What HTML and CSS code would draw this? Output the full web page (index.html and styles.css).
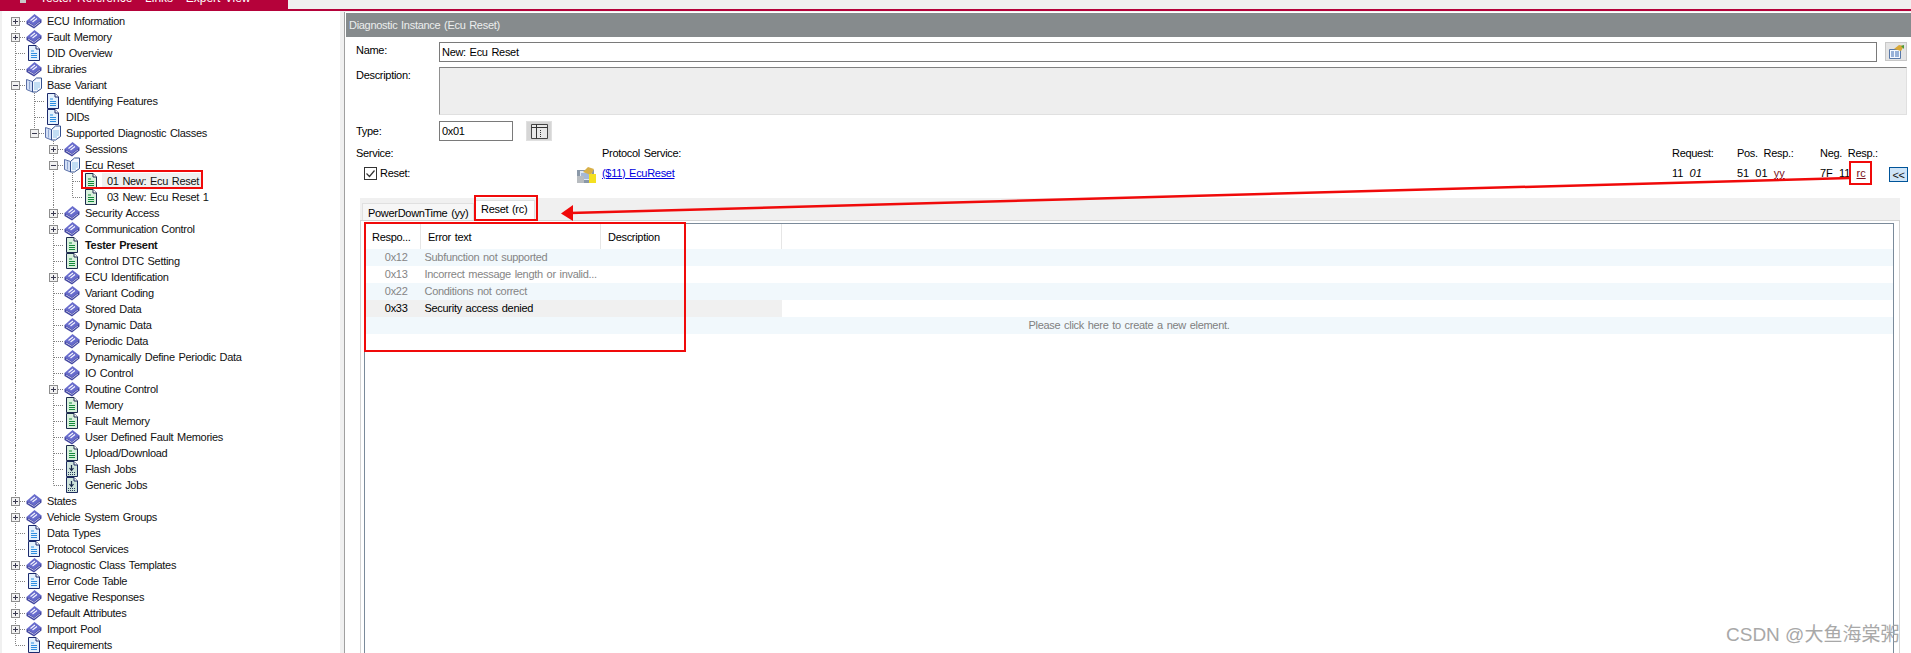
FILE: index.html
```html
<!DOCTYPE html>
<html lang="en">
<head>
  <meta charset="UTF-8" />
  <meta name="viewport" content="width=device-width, initial-scale=1.0"/>
  <title>Tester Reference - Links - Expert View</title>
  <link rel="stylesheet" href="styles.css">
</head>
<body>

  <!-- Shared icons -->
  <svg class="defs" width="0" height="0">
    <symbol id="book" viewBox="0 0 16 16">
      <path d="M.5 8v3l7.500 4.500 7.500-6v-3z" fill="#4246a0"/>
      <path d="M2 9.500l6 3.500 6-4.500v.8l-6 4.500-6-3.500z" fill="#e4e4f6"/>
      <path d="M.5 8L8.500 1l7 5.500-7.500 6z" fill="#686ccc"/>
      <path d="M4.500 7.500l4.500-3.500M6.500 9l4.500-3.500" stroke="#f4f4ff" stroke-width="1.200"/>
    </symbol>
    <symbol id="open" viewBox="0 0 16 16">
      <path d="M.5 2.500l6 2v10.500l-6-2.500z" fill="#d4e0f6" stroke="#5a6fa8"/>
      <path d="M6.500 4.500l4-3.500h5v10.500l-5 3.500h-4z" fill="#f4f8ff" stroke="#34508e"/>
      <path d="M8.500 6h5M8.500 8h5M8.500 10h5M8.500 12h4" stroke="#2f8fd0" stroke-dasharray="1 1"/>
      <path d="M3.500 4.500v8" stroke="#8fa6d0"/>
    </symbol>
    <symbol id="page" viewBox="0 0 16 16">
      <path d="M2.500 .5h7.500l3.500 3.500v11.500h-11z" fill="#e4f1fd" stroke="#1c2a6c"/>
      <path d="M10 .5v3.500h3.500" fill="#fff" stroke="#1c2a6c"/>
      <path d="M5 6h3M5 8.500h6M5 10.500h6M5 12.500h6" stroke="#2f8ee0"/>
    </symbol>
    <symbol id="leaf" viewBox="0 0 16 16">
      <path d="M2.500 .5h7.500l3.500 3.500v11.500h-11z" fill="#d8f0dc" stroke="#1c2a4c"/>
      <path d="M10 .5v3.500h3.500" fill="#fff" stroke="#1c2a4c"/>
      <path d="M5 6h3M5 8.500h6M5 10.500h6M5 12.500h6" stroke="#128a3a"/>
    </symbol>
    <symbol id="job" viewBox="0 0 16 16">
      <path d="M2.500 .5h7.500l3.500 3.500v11.500h-11z" fill="#cfe4dc" stroke="#1c2a5c"/>
      <path d="M10 .5v3.500h3.500" fill="#fff" stroke="#1c2a5c"/>
      <path d="M7.500 4v5M5.500 7l2 2.500L9.500 7" fill="none" stroke="#1c2a4c" stroke-width="1.200"/>
      <path d="M4 11.500h8M4 13.500h8" stroke="#2a3a5c" stroke-dasharray="1 1"/>
    </symbol>

    <!-- Tree connectors -->
    <symbol id="tee" viewBox="0 0 19 16">
      <path d="M9.500 0v16M10 8.500h9" stroke="#808080" stroke-dasharray="1 1"/>
    </symbol>
    <symbol id="end" viewBox="0 0 19 16">
      <path d="M9.500 0v8.500M10 8.500h9" stroke="#808080" stroke-dasharray="1 1"/>
    </symbol>
    <symbol id="plus" viewBox="0 0 19 16">
      <path d="M9.500 0v16M14 8.500h5" stroke="#808080" stroke-dasharray="1 1"/>
      <rect x="5.500" y="4.500" width="8" height="8" fill="#f2f2f2" stroke="#8e8e8e"/>
      <path d="M7 8.500h5M9.500 6v5" stroke="#3a3a50"/>
    </symbol>
    <symbol id="plus-first" viewBox="0 0 19 16">
      <path d="M9.500 12v4M14 8.500h5" stroke="#808080" stroke-dasharray="1 1"/>
      <rect x="5.500" y="4.500" width="8" height="8" fill="#f2f2f2" stroke="#8e8e8e"/>
      <path d="M7 8.500h5M9.500 6v5" stroke="#3a3a50"/>
    </symbol>
    <symbol id="minus" viewBox="0 0 19 16">
      <path d="M9.500 0v16M14 8.500h5" stroke="#808080" stroke-dasharray="1 1"/>
      <rect x="5.500" y="4.500" width="8" height="8" fill="#f2f2f2" stroke="#8e8e8e"/>
      <path d="M7 8.500h5" stroke="#3a3a50"/>
    </symbol>
    <symbol id="minus-end" viewBox="0 0 19 16">
      <path d="M9.500 0v5M14 8.500h5" stroke="#808080" stroke-dasharray="1 1"/>
      <rect x="5.500" y="4.500" width="8" height="8" fill="#f2f2f2" stroke="#8e8e8e"/>
      <path d="M7 8.500h5" stroke="#3a3a50"/>
    </symbol>
  </svg>

  <div class="titlebar">
    <div class="brand">
      <span class="brand-icon"></span>
      <span class="brand-text">Tester Reference - Links - Expert View</span>
    </div>
  </div>
  <div class="rule"></div>

  <div class="main">

    <!-- Left tree -->
    <div class="tree">
      <div class="row"><svg class="tw"><use href="#plus-first"/></svg><svg class="ic"><use href="#book"/></svg><span>ECU Information</span></div>
      <div class="row"><svg class="tw"><use href="#plus"/></svg><svg class="ic"><use href="#book"/></svg><span>Fault Memory</span></div>
      <div class="row"><svg class="tw"><use href="#tee"/></svg><svg class="ic"><use href="#page"/></svg><span>DID Overview</span></div>
      <div class="row"><svg class="tw"><use href="#tee"/></svg><svg class="ic"><use href="#book"/></svg><span>Libraries</span></div>
      <div class="row"><svg class="tw"><use href="#minus"/></svg><svg class="ic"><use href="#open"/></svg><span>Base Variant</span></div>
      <div class="row"><i class="g"></i><svg class="tw"><use href="#tee"/></svg><svg class="ic"><use href="#page"/></svg><span>Identifying Features</span></div>
      <div class="row"><i class="g"></i><svg class="tw"><use href="#tee"/></svg><svg class="ic"><use href="#page"/></svg><span>DIDs</span></div>
      <div class="row"><i class="g"></i><svg class="tw"><use href="#minus-end"/></svg><svg class="ic"><use href="#open"/></svg><span>Supported Diagnostic Classes</span></div>
      <div class="row"><i class="g"></i><i class="g off"></i><svg class="tw"><use href="#plus"/></svg><svg class="ic"><use href="#book"/></svg><span>Sessions</span></div>
      <div class="row"><i class="g"></i><i class="g off"></i><svg class="tw"><use href="#minus"/></svg><svg class="ic"><use href="#open"/></svg><span>Ecu Reset</span></div>
      <div class="row"><i class="g"></i><i class="g off"></i><i class="g"></i><svg class="tw"><use href="#tee"/></svg><svg class="ic"><use href="#leaf"/></svg><span class="deep selected">01 New: Ecu Reset</span></div>
      <div class="row"><i class="g"></i><i class="g off"></i><i class="g"></i><svg class="tw"><use href="#end"/></svg><svg class="ic"><use href="#leaf"/></svg><span class="deep">03 New: Ecu Reset 1</span></div>
      <div class="row"><i class="g"></i><i class="g off"></i><svg class="tw"><use href="#plus"/></svg><svg class="ic"><use href="#book"/></svg><span>Security Access</span></div>
      <div class="row"><i class="g"></i><i class="g off"></i><svg class="tw"><use href="#plus"/></svg><svg class="ic"><use href="#book"/></svg><span>Communication Control</span></div>
      <div class="row"><i class="g"></i><i class="g off"></i><svg class="tw"><use href="#tee"/></svg><svg class="ic"><use href="#leaf"/></svg><b>Tester Present</b></div>
      <div class="row"><i class="g"></i><i class="g off"></i><svg class="tw"><use href="#tee"/></svg><svg class="ic"><use href="#leaf"/></svg><span>Control DTC Setting</span></div>
      <div class="row"><i class="g"></i><i class="g off"></i><svg class="tw"><use href="#plus"/></svg><svg class="ic"><use href="#book"/></svg><span>ECU Identification</span></div>
      <div class="row"><i class="g"></i><i class="g off"></i><svg class="tw"><use href="#tee"/></svg><svg class="ic"><use href="#book"/></svg><span>Variant Coding</span></div>
      <div class="row"><i class="g"></i><i class="g off"></i><svg class="tw"><use href="#tee"/></svg><svg class="ic"><use href="#book"/></svg><span>Stored Data</span></div>
      <div class="row"><i class="g"></i><i class="g off"></i><svg class="tw"><use href="#tee"/></svg><svg class="ic"><use href="#book"/></svg><span>Dynamic Data</span></div>
      <div class="row"><i class="g"></i><i class="g off"></i><svg class="tw"><use href="#tee"/></svg><svg class="ic"><use href="#book"/></svg><span>Periodic Data</span></div>
      <div class="row"><i class="g"></i><i class="g off"></i><svg class="tw"><use href="#tee"/></svg><svg class="ic"><use href="#book"/></svg><span>Dynamically Define Periodic Data</span></div>
      <div class="row"><i class="g"></i><i class="g off"></i><svg class="tw"><use href="#tee"/></svg><svg class="ic"><use href="#book"/></svg><span>IO Control</span></div>
      <div class="row"><i class="g"></i><i class="g off"></i><svg class="tw"><use href="#plus"/></svg><svg class="ic"><use href="#book"/></svg><span>Routine Control</span></div>
      <div class="row"><i class="g"></i><i class="g off"></i><svg class="tw"><use href="#tee"/></svg><svg class="ic"><use href="#leaf"/></svg><span>Memory</span></div>
      <div class="row"><i class="g"></i><i class="g off"></i><svg class="tw"><use href="#tee"/></svg><svg class="ic"><use href="#leaf"/></svg><span>Fault Memory</span></div>
      <div class="row"><i class="g"></i><i class="g off"></i><svg class="tw"><use href="#tee"/></svg><svg class="ic"><use href="#book"/></svg><span>User Defined Fault Memories</span></div>
      <div class="row"><i class="g"></i><i class="g off"></i><svg class="tw"><use href="#tee"/></svg><svg class="ic"><use href="#leaf"/></svg><span>Upload/Download</span></div>
      <div class="row"><i class="g"></i><i class="g off"></i><svg class="tw"><use href="#tee"/></svg><svg class="ic"><use href="#job"/></svg><span>Flash Jobs</span></div>
      <div class="row"><i class="g"></i><i class="g off"></i><svg class="tw"><use href="#end"/></svg><svg class="ic"><use href="#job"/></svg><span>Generic Jobs</span></div>
      <div class="row"><svg class="tw"><use href="#plus"/></svg><svg class="ic"><use href="#book"/></svg><span>States</span></div>
      <div class="row"><svg class="tw"><use href="#plus"/></svg><svg class="ic"><use href="#book"/></svg><span>Vehicle System Groups</span></div>
      <div class="row"><svg class="tw"><use href="#tee"/></svg><svg class="ic"><use href="#page"/></svg><span>Data Types</span></div>
      <div class="row"><svg class="tw"><use href="#tee"/></svg><svg class="ic"><use href="#page"/></svg><span>Protocol Services</span></div>
      <div class="row"><svg class="tw"><use href="#plus"/></svg><svg class="ic"><use href="#book"/></svg><span>Diagnostic Class Templates</span></div>
      <div class="row"><svg class="tw"><use href="#tee"/></svg><svg class="ic"><use href="#page"/></svg><span>Error Code Table</span></div>
      <div class="row"><svg class="tw"><use href="#plus"/></svg><svg class="ic"><use href="#book"/></svg><span>Negative Responses</span></div>
      <div class="row"><svg class="tw"><use href="#plus"/></svg><svg class="ic"><use href="#book"/></svg><span>Default Attributes</span></div>
      <div class="row"><svg class="tw"><use href="#plus"/></svg><svg class="ic"><use href="#book"/></svg><span>Import Pool</span></div>
      <div class="row"><svg class="tw"><use href="#end"/></svg><svg class="ic"><use href="#page"/></svg><span>Requirements</span></div>
    </div>

    <div class="splitter"></div>

    <!-- Right detail -->
    <div class="detail">
      <div class="heading">Diagnostic Instance (Ecu Reset)</div>

      <div class="field name-field">
        <label>Name:</label>
        <div class="input wide">New: Ecu Reset</div>
        <div class="icon-btn">
          <svg width="17" height="15" viewBox="0 0 17 15">
            <path d="M1.500 5.500h11v9h-11z" fill="#f4f8ff" stroke="#5878a8"/>
            <path d="M3 8h3M7 8h4M3 10h3M7 10h4M3 12h3M7 12h4" stroke="#3a6ab0"/>
            <path d="M6 5l5-4 5 1-3 5z" fill="#d8a838"/>
            <path d="M13 2l3-1v4z" fill="#4a9a3a"/>
          </svg>
        </div>
      </div>

      <div class="field desc-field">
        <label>Description:</label>
        <div class="desc"></div>
      </div>

      <div class="field type-field">
        <label>Type:</label>
        <div class="input short">0x01</div>
        <div class="type-btn">
          <svg width="19" height="15" viewBox="0 0 19 15">
            <path d="M1.500 .5h16v14h-16z" fill="#e8e8e8" stroke="#444"/>
            <path d="M1.500 3.500h16M6.500 .5v14" stroke="#333"/>
            <path d="M10.500 6v8" stroke="#333" stroke-dasharray="1 1"/>
          </svg>
        </div>
      </div>

      <div class="service">
        <span class="s-first">Service:</span><span></span><span>Protocol Service:</span>
        <span>Request:</span><span class="wider">Pos. Resp.:</span><span class="wider">Neg. Resp.:</span><span></span>

        <span class="s-first check"><i class="box">
          <svg width="11" height="11" viewBox="0 0 11 11"><path d="M1.500 5.500l3 3 5-6" fill="none" stroke="#333" stroke-width="1.200"/></svg>
        </i>Reset:</span>
        <span class="p-icon">
          <svg width="19" height="16" viewBox="0 0 19 16">
            <path d="M0 3h17v13H0z" fill="#8a98a8"/>
            <path d="M3 4h12v9H3z" fill="#dfe8f4"/>
            <path d="M4 7h9M4 9h9M4 11h9" stroke="#6a88b8"/>
            <path d="M0 9h7v7H0z" fill="#b8bcc0"/>
            <path d="M6 5l5-5 6 2-3 6z" fill="#d8b048"/>
            <path d="M12 7h7v9h-7z" fill="#f4e020"/>
          </svg>
        </span>
        <a class="link" href="#">($11) EcuReset</a>
        <span class="vals">11&nbsp; <em>01</em></span>
        <span class="vals">51&nbsp; 01&nbsp; <u class="param">yy</u></span>
        <span class="vals">7F&nbsp; 11&nbsp; <u class="param">rc</u></span>
        <span class="back">&lt;&lt;</span>
      </div>

      <div class="tabs">
        <div class="tabstrip">
          <div class="tab">PowerDownTime (yy)</div>
          <div class="tab active">Reset (rc)</div>
        </div>
        <div class="tabpanel">
          <div class="listbox">
            <table class="grid">
              <thead>
                <tr>
                  <th class="c1">Respo...</th>
                  <th class="c2">Error text</th>
                  <th class="c3">Description</th>
                  <th></th>
                </tr>
              </thead>
              <tbody>
                <tr class="alt muted"><td class="num">0x12</td><td>Subfunction not supported</td><td></td><td></td></tr>
                <tr class="muted"><td class="num">0x13</td><td>Incorrect message length or invalid...</td><td></td><td></td></tr>
                <tr class="alt muted"><td class="num">0x22</td><td>Conditions not correct</td><td></td><td></td></tr>
                <tr class="current"><td class="num">0x33</td><td>Security access denied</td><td></td><td class="blank"></td></tr>
                <tr class="alt muted"><td class="create" colspan="4">Please click here to create a new element.</td></tr>
              </tbody>
            </table>
          </div>
        </div>
      </div>
    </div>
  </div>

  <!-- Red annotations drawn over the screenshot -->
  <svg class="marks" width="1911" height="653" viewBox="0 0 1911 653">
    <g fill="none" stroke="#f00a0a" stroke-width="2">
      <rect x="82" y="171" width="120" height="17"/>
      <rect x="1850" y="162" width="21" height="22"/>
      <rect x="475" y="196" width="62" height="24"/>
      <rect x="365" y="223" width="320" height="128"/>
      <path d="M1850 178L570 213" stroke-width="2.500"/>
    </g>
    <path d="M561 213.500L573 205v16z" fill="#f00a0a"/>
  </svg>

  <div class="watermark">CSDN @大鱼海棠粥</div>

</body>
</html>
```

FILE: styles.css
```css
html, body {
  margin: 0;
  height: 653px;
  overflow: hidden;
}

body {
  font-family: 'Liberation Sans', sans-serif;
  font-size: 11px;
  letter-spacing: -0.3px;
  word-spacing: 1px;
  color: #000;
  background: #f0f0f0;
  display: flex;
  flex-direction: column;
}

.defs {
  position: absolute;
}

/* Title bar */
.titlebar {
  height: 9px;
  flex: none;
}

.brand {
  width: 288px;
  height: 9px;
  background: #b5023a;
  overflow: hidden;
  display: flex;
  gap: 14px;
  padding-left: 20px;
  box-sizing: border-box;
}

.brand-icon {
  width: 6px;
  height: 3px;
  background: #c8c8c8;
}

.brand-text {
  color: #fff;
  font-size: 12px;
  letter-spacing: 0;
  line-height: 14px;
  margin-top: -9px;
  white-space: nowrap;
  word-spacing: 1px;
}

.rule {
  height: 2px;
  flex: none;
  background: #b5023a;
}

.main {
  flex: 1;
  display: flex;
  min-height: 0;
  padding-top: 1px;
}

/* Tree */
.tree {
  width: 338px;
  flex: none;
  margin-left: 2px;
  padding: 0 0 0 4px;
  box-sizing: border-box;
  background: #fff;
  overflow: hidden;
  margin-top: -1px;
  padding-top: 2px;
}

.row {
  height: 16px;
  display: flex;
  align-items: center;
  color: #111;
  white-space: nowrap;
}

.row span,
.row b {
  margin-left: 5px;
}

.row .deep {
  margin-left: 8px;
}

.row .selected {
  background: #f0f0f0;
  line-height: 16px;
  padding-right: 3px;
  margin-left: 3px;
  padding-left: 5px;
}

.g {
  width: 10px;
  height: 16px;
  margin-left: 9px;
  border-left: 1px dotted #808080;
  box-sizing: border-box;
}

.g.off {
  border-left-color: transparent;
}

.tw {
  width: 19px;
  height: 16px;
  flex: none;
}

.ic {
  width: 16px;
  height: 16px;
  flex: none;
  margin-left: 1px;
}

.splitter {
  width: 4px;
  flex: none;
  border-right: 1px solid #a0a0a0;
}

/* Detail pane */
.detail {
  flex: 1;
  min-width: 0;
  background: #fff;
  padding-top: 1px;
  padding-left: 1px;
  display: flex;
  flex-direction: column;
}

.heading {
  height: 24px;
  line-height: 24px;
  background: #868b8d;
  color: #eceeee;
  padding-left: 3px;
  flex: none;
}

.field {
  display: flex;
  flex: none;
  padding-left: 10px;
}

.field label {
  width: 83px;
  flex: none;
}

.name-field {
  margin-top: 5px;
  height: 20px;
}

.name-field label {
  line-height: 16px;
}

.input {
  border: 1px solid #7a7a7a;
  box-sizing: border-box;
  height: 20px;
  line-height: 18px;
  padding-left: 2px;
  background: #fff;
}

.wide {
  flex: 1;
}

.short {
  width: 74px;
}

.icon-btn {
  width: 22px;
  height: 19px;
  margin: 0 4px 0 8px;
  background: #e4e4e4;
  border: 1px solid #c8c8c8;
  box-sizing: border-box;
  display: flex;
  align-items: center;
  justify-content: center;
}

.desc-field {
  margin-top: 5px;
  height: 48px;
}

.desc-field label {
  line-height: 16px;
}

.desc {
  flex: 1;
  margin-right: 4px;
  background: #eeeeee;
  border: 1px solid #e0e0e0;
  border-top-color: #808080;
  border-left-color: #909090;
}

.type-field {
  margin-top: 6px;
  height: 20px;
  line-height: 20px;
}

.type-btn {
  width: 26px;
  height: 20px;
  margin-left: 13px;
  background: #d6d6d6;
  border: 1px solid #e0e0e0;
  box-sizing: border-box;
  display: flex;
  align-items: center;
  justify-content: center;
}

.service {
  display: grid;
  grid-template-columns: 221px 25px 1070px 65px 83px 70px 1fr;
  grid-template-rows: 20px 20px;
  align-items: center;
  margin-top: 2px;
  padding-left: 10px;
  flex: none;
}

.wider {
  word-spacing: 3px;
}

.vals {
  letter-spacing: 0;
  word-spacing: 0;
  white-space: nowrap;
}

.s-first {
  white-space: nowrap;
}

.check {
  display: flex;
  align-items: center;
  gap: 3px;
  padding-left: 8px;
}

.box {
  width: 13px;
  height: 13px;
  border: 1px solid #333;
  box-sizing: border-box;
  display: flex;
  align-items: center;
  justify-content: center;
}

.p-icon {
  display: flex;
  margin-top: 3px;
}

.link {
  color: #0000e0;
}

.param {
  color: #7a1020;
}

.back {
  width: 19px;
  height: 15px;
  line-height: 14px;
  text-align: center;
  background: #cfe4f7;
  border: 1px solid #005499;
  box-sizing: border-box;
  color: #111;
  margin-left: -1px;
  margin-top: 2px;
}

/* Tabs */
.tabs {
  margin: 15px 11px 0 14px;
  flex: 1;
  min-height: 0;
  display: flex;
  flex-direction: column;
}

.tabstrip {
  height: 22px;
  flex: none;
  background: #f0f0f0;
  display: flex;
  align-items: flex-end;
  padding-left: 2px;
}

.tab {
  height: 17px;
  padding: 1px 5px 0;
  line-height: 17px;
  width: 112px;
  box-sizing: border-box;
  background: #f6f6f6;
  border: 1px solid #e0e0e0;
  border-bottom: 0;
  white-space: nowrap;
}

.tab.active {
  height: 20px;
  padding-top: 0;
  width: 60px;
  background: #fff;
  margin-left: 1px;
}

.tabpanel {
  flex: 1;
  min-height: 0;
  border: 1px solid #d4d4d4;
  border-bottom: 0;
  padding: 2px 5px 0 3px;
  display: flex;
  background: #fff;
}

.listbox {
  flex: 1;
  border: 1px solid #7a8a9a;
  border-bottom: 0;
  min-width: 0;
}

/* Grid */
.grid {
  width: 100%;
  border-collapse: collapse;
  table-layout: fixed;
  font-size: 11px;
}

.grid th {
  height: 25px;
  padding: 0 0 0 7px;
  font-weight: normal;
  text-align: left;
  border-right: 1px solid #e6e6e6;
}

.grid th:last-child {
  border-right: 0;
}

.c1 {
  width: 48px;
}

.c2 {
  width: 172px;
}

.c3 {
  width: 173px;
}

.grid td {
  height: 16px;
  padding: 0 0 1px 4px;
  white-space: nowrap;
}

.grid .num {
  text-align: right;
  padding: 0 13px 1px 0;
}

.alt {
  background: #f1f8fc;
}

.muted {
  color: #858585;
}

.current {
  background: #f0f0f0;
}

.grid .blank {
  background: #fff;
}

.grid .create {
  text-align: center;
  color: #808080;
  height: 15px;
  padding: 0 0 2px;
}

/* Overlays */
.marks {
  position: absolute;
  top: 0;
  left: 0;
  pointer-events: none;
}

.watermark {
  position: absolute;
  left: 1726px;
  top: 623px;
  font-family: 'Liberation Sans', 'Noto Sans CJK SC', sans-serif;
  font-size: 19px;
  letter-spacing: 0;
  word-spacing: 0;
  line-height: 24px;
  color: #a8a8a8;
  white-space: nowrap;
}
```
